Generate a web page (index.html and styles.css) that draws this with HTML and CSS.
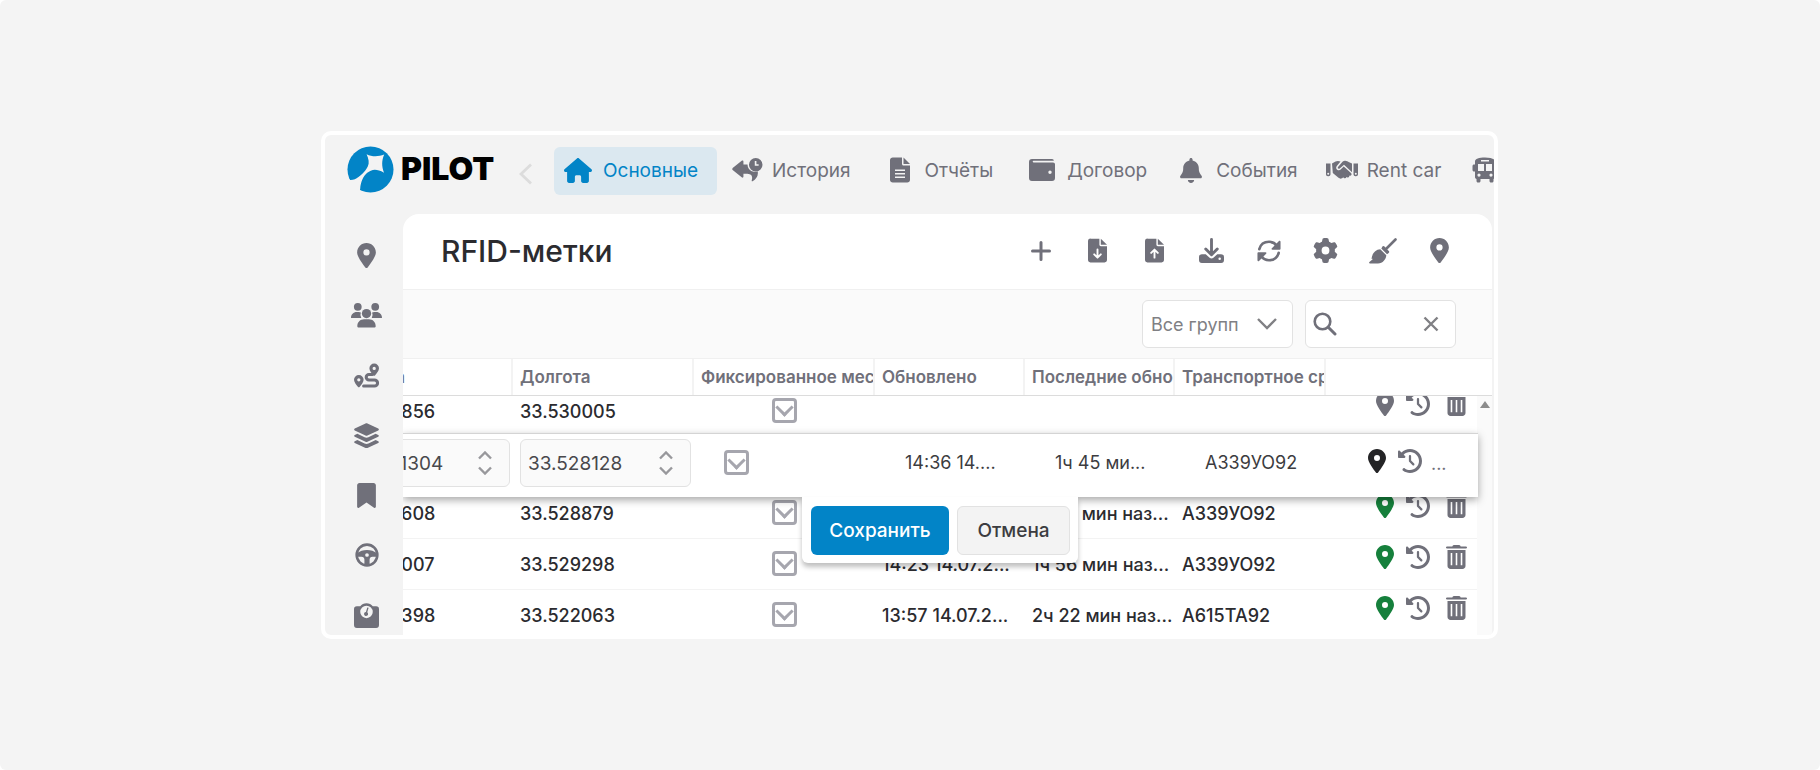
FILE: index.html
```html
<!DOCTYPE html>
<html lang="ru">
<head>
<meta charset="utf-8">
<meta name="viewport" content="width=device-width, initial-scale=1">
<title>PILOT — RFID-метки</title>
<link rel="stylesheet" href="styles.css">
</head>
<body>
<svg class="sprite" aria-hidden="true">
  <symbol id="pin" viewBox="0 0 384 512"><path d="M215.7 499.2C267 435 384 279.4 384 192C384 86 298 0 192 0S0 86 0 192c0 87.4 117 243 168.3 307.2c12.3 15.3 35.1 15.3 47.4 0zM192 128a64 64 0 1 1 0 128 64 64 0 1 1 0-128z"/></symbol>
  <symbol id="history" viewBox="0 0 512 512"><path d="M75 75L41 41C25.9 25.9 0 36.6 0 57.9V168c0 13.3 10.7 24 24 24H134.1c21.4 0 32.1-25.9 17-41l-30.8-30.8C155 85.5 203 64 256 64c106 0 192 86 192 192s-86 192-192 192c-40.8 0-78.6-12.7-109.7-34.4c-14.5-10.1-34.4-6.6-44.6 7.9s-6.6 34.4 7.9 44.6C151.2 495 201.7 512 256 512c141.4 0 256-114.6 256-256S397.4 0 256 0C185.3 0 121.3 28.7 75 75zm181 53c-13.3 0-24 10.7-24 24V256c0 6.4 2.5 12.5 7 17l72 72c9.4 9.4 24.6 9.4 33.9 0s9.4-24.6 0-33.9l-65-65V152c0-13.3-10.7-24-24-24z"/></symbol>
  <symbol id="trash" viewBox="0 0 448 512"><path fill-rule="evenodd" d="M170 0h108c12 0 23 7 28 18l7 14h103c18 0 32 7 32 20s-14 20-32 20H32C14 72 0 65 0 52s14-20 32-20h103l7-14C147 7 158 0 170 0zM32 104h384v344c0 35-29 64-64 64H96c-35 0-64-29-64-64zM100 168v264h34V168zM207 168v264h34V168zM314 168v264h34V168z"/></symbol>
  <symbol id="home" viewBox="0 0 576 512"><path d="M575.8 255.5c0 18-15 32.1-32 32.1h-32l.7 160.2c0 2.7-.2 5.4-.5 8.1V472c0 22.1-17.9 40-40 40H392c-22.1 0-40-17.9-40-40V384c0-17.7-14.3-32-32-32H256c-17.7 0-32 14.3-32 32v88c0 22.1-17.9 40-40 40H104c-22.1 0-40-17.9-40-40V287.6H32c-18 0-32-14-32-32.1c0-9 3-17 10-24L266.4 8c7-7 15-8 22-8s15 2 21 7L564.8 231.5c8 7 12 15 11 24z"/></symbol>
  <symbol id="reply-clock" viewBox="0 0 32 26"><path d="M1 10.600 10 3.500c1-.8 1.800-.3 1.800.8v3h4.200a8 8 0 0 0 6.500 7.600c1.500 0 3.500-.3 4-.6 1 4.500-1.500 8-5.200 10.200-.8.4-1.200-.1-.9-.9 1-3.600.2-6.600-4.600-6.800h-4v3c0 1.100-.8 1.600-1.800.8L1 13.200a1.700 1.700 0 0 1 0-2.600z"/><path fill-rule="evenodd" d="M24.500.5a7 7 0 1 1 0 14 7 7 0 0 1 0-14zM23.500 3.800v4.800h4V7h-2.300V3.800z"/></symbol>
  <symbol id="report" viewBox="0 0 20 26"><path fill-rule="evenodd" d="M3 .5h9V7c0 .8.700 1.500 1.500 1.500H20v14a2.800 2.800 0 0 1-3 3H3a2.800 2.800 0 0 1-3-3v-19a2.800 2.800 0 0 1 3-3zM5 12.500V14h10v-1.500zM5 16v1.500h10V16zM5 19.500V21h10v-1.500z"/><path d="M13.500.5 20 7h-6.500z"/></symbol>
  <symbol id="wallet" viewBox="0 0 26 22"><path fill-rule="evenodd" d="M3 0h20c1.200 0 1.800.8 1.800 1.800H4.500a.8.800 0 0 0 0 1.600H24c1.300 0 2 .9 2 2V19a3 3 0 0 1-3 3H3a3 3 0 0 1-3-3V3a3 3 0 0 1 3-3zM21 11.500a1.700 1.700 0 1 0 0 3.400 1.700 1.700 0 0 0 0-3.400z"/></symbol>
  <symbol id="bell" viewBox="0 0 448 512"><path d="M224 0c-17.700 0-32 14.300-32 32V51.200C119 66 64 130.600 64 208v18.800c0 47-17.300 92.400-48.500 127.600l-7.400 8.300c-8.400 9.400-10.400 22.900-5.300 34.400S19.400 416 32 416H416c12.600 0 24-7.400 29.200-18.900s3.100-25-5.300-34.400l-7.400-8.300C401.300 319.200 384 273.900 384 226.800V208c0-77.400-55-142-128-156.800V32c0-17.700-14.300-32-32-32zm45.300 493.300c12-12 18.700-28.300 18.700-45.300H160c0 17 6.700 33.300 18.700 45.300s28.300 18.700 45.300 18.700s33.300-6.700 45.300-18.700z"/></symbol>
  <symbol id="handshake" viewBox="0 0 32 20"><path fill-rule="evenodd" d="M0 3.500h4.500v10.800c0 1.200-.9 2-2 2H2c-1.200 0-2-.8-2-2zM2.200 12.800a1 1 0 1 0 0 2 1 1 0 0 0 0-2zM27.500 3.500H32v10.800c0 1.200-.8 2-2 2h-.5c-1.100 0-2-.8-2-2zM29.800 12.800a1 1 0 1 0 0 2 1 1 0 0 0 0-2z"/><path d="M6 3.600 9.500 1.500C11 .8 13 .8 14.500 1.600L10.800 6c-1 1.300-.8 2.800.4 3.700 1.300.9 2.700.7 3.700-.4l2.800-2.800 7.300 6.500c.9.900.7 2-.2 2.500-.6.400-1.200.3-1.600 0 .3 1-.3 1.800-1.100 2-.7.300-1.200 0-1.600-.4-.5 1.300-1.700 1.600-2.600.8l-.8-.7c-1.200 1.800-3.200 1.800-4.600.6L6.800 13z"/><path d="m12 7 4.500-5.200C17.300 1 18.300.7 19.300.8c1.500.1 2.300.5 3.300 1.200L26 3.600v8.600l-8-7.400-4.300 3.600c-1.200.9-2.500-.1-1.700-1.400z"/></symbol>
  <symbol id="bus" viewBox="0 0 26 26"><path fill-rule="evenodd" d="M13 .5c6 0 10 1.400 10 4v3h1c.8 0 1.500.7 1.500 1.500v4c0 .8-.7 1.500-1.500 1.500h-1V20c0 1-.6 1.700-1.500 2v2c0 .9-.6 1.500-1.500 1.500h-1c-.9 0-1.500-.6-1.500-1.500v-2h-9v2c0 .9-.6 1.500-1.500 1.500H6c-.9 0-1.500-.6-1.500-1.500v-2C3.600 21.700 3 21 3 20v-5.500H2c-.8 0-1.500-.7-1.500-1.500V9c0-.8.700-1.500 1.500-1.500h1v-3c0-2.600 4-4 10-4zM9 3v1.500h8V3zM6 7v7h6V7zM14 7v7h6V7zM7 16.500a1.600 1.600 0 1 0 0 3.200 1.600 1.600 0 0 0 0-3.200zM19 16.500a1.600 1.600 0 1 0 0 3.200 1.600 1.600 0 0 0 0-3.200z"/></symbol>
  <symbol id="users" viewBox="0 0 32 26"><circle cx="7" cy="4.500" r="4"/><circle cx="25" cy="4.500" r="4"/><circle cx="16" cy="11.500" r="4.800"/><path d="M0 16c0-3.500 2.500-6 6-6h2c.8 0 1.600.2 2.200.5a6 6 0 0 0 .4 5.500zM32 16c0-3.500-2.500-6-6-6h-2c-.8 0-1.600.2-2.200.5a6 6 0 0 1-.4 5.500zM6.500 24.500c0-4 3-7 7-7h5c4 0 7 3 7 7 0 .8-.7 1.500-1.500 1.500H8c-.8 0-1.500-.7-1.500-1.500z"/></symbol>
  <symbol id="route" viewBox="0 0 26 26"><path fill-rule="evenodd" d="M21 .5a5 5 0 0 1 5 5c0 2.700-2.500 5.500-4 7.200a1.300 1.300 0 0 1-2 0c-1.500-1.700-4-4.500-4-7.200a5 5 0 0 1 5-5zM21 4a1.700 1.700 0 1 0 0 3.400A1.700 1.700 0 0 0 21 4zM5 12.500a5 5 0 0 1 5 5c0 2.500-2.500 5.500-4 7.200a1.300 1.300 0 0 1-2 0c-1.500-1.700-4-4.700-4-7.200a5 5 0 0 1 5-5zM5 15.800a1.700 1.700 0 1 0 0 3.400 1.700 1.700 0 0 0 0-3.400z"/><path d="M19 12h-3.500a2.800 2.800 0 0 0 0 5.600h5.800a3.200 3.200 0 0 1 0 6.400H10" fill="none" stroke="currentColor" stroke-width="3.200" stroke-linecap="round"/></symbol>
  <symbol id="layers" viewBox="0 0 26 26"><path d="M12 .4c.6-.3 1.400-.3 2 0l11.200 5.300c.9.400.9 1.600 0 2L14 13c-.6.300-1.400.3-2 0L.8 7.700c-.9-.4-.9-1.600 0-2z"/><path d="m3.500 11.200 7.500 3.600c1.300.6 2.700.6 4 0l7.500-3.600 2.700 1.200c.9.400.9 1.500 0 1.900L14 19.500c-.6.300-1.400.3-2 0L.8 14.300c-.9-.4-.9-1.500 0-1.900z"/><path d="m3.500 17.700 7.500 3.600c1.300.6 2.700.6 4 0l7.500-3.600 2.700 1.200c.9.400.9 1.500 0 1.900L14 26c-.6.300-1.400.3-2 0L.8 20.800c-.9-.4-.9-1.500 0-1.900z"/></symbol>
  <symbol id="bookmark" viewBox="0 0 384 512"><path d="M0 48V487.700C0 501.100 10.900 512 24.300 512c5 0 9.900-1.500 14-4.400L192 400 345.700 507.600c4.100 2.900 9 4.400 14 4.400c13.400 0 24.300-10.900 24.300-24.300V48c0-26.500-21.500-48-48-48H48C21.500 0 0 21.500 0 48z"/></symbol>
  <symbol id="wheel" viewBox="0 0 26 26"><circle cx="13" cy="13" r="11.200" fill="none" stroke="currentColor" stroke-width="2.800"/><path fill-rule="evenodd" d="M2 11.500C5 8.600 9 7.600 13 7.600s8 1 11 3.900V15h-5c-2 0-3.200 1.300-3.200 3.200V24h-5.600v-5.800c0-1.900-1.200-3.200-3.200-3.200H2zM13 11a2 2 0 1 0 0 4 2 2 0 0 0 0-4z"/></symbol>
  <symbol id="scale" viewBox="0 0 26 26"><path fill-rule="evenodd" d="M6.500 3.500C8 1.500 10.300.2 13 .2s5 1.300 6.500 3.300H23a3 3 0 0 1 3 3V23a3 3 0 0 1-3 3H3a3 3 0 0 1-3-3V6.500a3 3 0 0 1 3-3zM13 2.800a6.500 6.500 0 1 0 0 13 6.500 6.500 0 0 0 0-13z"/><path d="m15.200 5-1.400 4.700a2.100 2.100 0 1 1-1.400-.4l1.400-4.700z"/></symbol>
  <symbol id="plus" viewBox="0 0 20 20"><path d="M10 1.500v17M1.500 10h17" stroke="currentColor" stroke-width="3" stroke-linecap="round"/></symbol>
  <symbol id="file-down" viewBox="0 0 20 26"><path d="M3 .5h9V7c0 .8.700 1.500 1.500 1.500H20v14a2.800 2.800 0 0 1-3 3H3a2.800 2.800 0 0 1-3-3v-19a2.800 2.800 0 0 1 3-3z"/><path d="M13.500.5 20 7h-6.500z"/><path class="cut" d="M10 12v8M6.500 17l3.500 3.500 3.500-3.500"/></symbol>
  <symbol id="file-up" viewBox="0 0 20 26"><path d="M3 .5h9V7c0 .8.700 1.500 1.500 1.500H20v14a2.800 2.800 0 0 1-3 3H3a2.800 2.800 0 0 1-3-3v-19a2.800 2.800 0 0 1 3-3z"/><path d="M13.500.5 20 7h-6.500z"/><path class="cut" d="M10 20.500v-8M6.500 15.500 10 12l3.500 3.500"/></symbol>
  <symbol id="download" viewBox="0 0 26 26"><path d="M13 1.500V16M7 11.500l6 6 6-6" fill="none" stroke="currentColor" stroke-width="3" stroke-linecap="round" stroke-linejoin="round"/><path fill-rule="evenodd" d="M3 17h4l4 3.500c1.300 1 2.700 1 4 0L19 17h4a3 3 0 0 1 3 3v3a3 3 0 0 1-3 3H3a3 3 0 0 1-3-3v-3a3 3 0 0 1 3-3zM21.500 20.300a1.300 1.300 0 1 0 0 2.600 1.300 1.300 0 0 0 0-2.600z"/></symbol>
  <symbol id="refresh" viewBox="0 0 26 26"><path d="M2.500 11C4 5.500 8.500 3 13 3c3.500 0 6.500 1.500 8.500 4.500M23.500 15C22 20.500 17.500 23 13 23c-3.500 0-6.500-1.500-8.500-4.500" fill="none" stroke="currentColor" stroke-width="2.900" stroke-linecap="round"/><path d="M25.500 3v7.500c0 .8-.5 1.200-1.200 1.200h-7.500c-1 0-1.400-1-.7-1.700l7.700-7.700c.7-.7 1.700-.3 1.700.7zM.5 23v-7.500c0-.8.500-1.200 1.200-1.200h7.500c1 0 1.400 1 .7 1.700l-7.700 7.700c-.7.700-1.700.3-1.700-.7z"/></symbol>
  <symbol id="gear" viewBox="0 0 512 512"><path d="M495.9 166.600c3.200 8.700 .5 18.400-6.400 24.600l-43.300 39.400c1.100 8.300 1.700 16.800 1.700 25.400s-.6 17.100-1.700 25.400l43.300 39.400c6.900 6.200 9.600 15.900 6.400 24.600c-4.400 11.900-9.700 23.300-15.800 34.300l-4.700 8.100c-6.600 11-14 21.400-22.100 31.200c-5.900 7.200-15.700 9.600-24.500 6.800l-55.700-17.700c-13.400 10.300-28.200 18.900-44 25.400l-12.500 57.100c-2 9.100-9 16.300-18.200 17.800c-13.800 2.300-28 3.500-42.500 3.500s-28.700-1.200-42.500-3.500c-9.200-1.500-16.200-8.700-18.200-17.800l-12.500-57.100c-15.800-6.500-30.600-15.100-44-25.400L83.100 425.900c-8.800 2.800-18.600 .3-24.500-6.800c-8.100-9.800-15.500-20.200-22.100-31.200l-4.700-8.100c-6.100-11-11.400-22.400-15.800-34.300c-3.200-8.700-.5-18.400 6.400-24.600l43.300-39.400C64.600 273.100 64 264.600 64 256s.6-17.100 1.700-25.400L22.400 191.200c-6.900-6.200-9.600-15.900-6.400-24.600c4.400-11.900 9.700-23.300 15.800-34.300l4.700-8.100c6.600-11 14-21.400 22.100-31.200c5.900-7.200 15.700-9.600 24.500-6.800l55.700 17.700c13.400-10.300 28.200-18.900 44-25.400l12.500-57.100c2-9.100 9-16.300 18.200-17.800C227.300 1.200 241.500 0 256 0s28.700 1.200 42.500 3.500c9.200 1.500 16.200 8.700 18.200 17.800l12.500 57.100c15.800 6.500 30.600 15.100 44 25.400l55.700-17.700c8.800-2.800 18.600-.3 24.500 6.800c8.100 9.800 15.500 20.200 22.100 31.200l4.700 8.100c6.100 11 11.400 22.400 15.800 34.300zM256 336a80 80 0 1 0 0-160 80 80 0 1 0 0 160z"/></symbol>
  <symbol id="broom" viewBox="0 0 28 26"><path d="m26.500 1.500-9 9" fill="none" stroke="currentColor" stroke-width="2.600" stroke-linecap="round"/><path d="M13.500 8.500c.6-.6 1.400-.5 2 .1l4.300 4.300c.6.600.6 1.500-.1 2l-1.700 1.300-5.700-5.800z"/><path d="m11.300 11.300 6 6c-.2 4-3.500 8.200-8.300 8.200H1c-.8 0-1.200-.9-.6-1.400l3-2.600c.4-.4.1-.8-.4-.7l-.5.100c.6-5.500 4-9.300 8.800-9.600z"/></symbol>
  <symbol id="search" viewBox="0 0 24 24"><circle cx="9.500" cy="9.500" r="7.800" fill="none" stroke="currentColor" stroke-width="2.600"/><path d="m15.500 15.500 6.500 6.500" fill="none" stroke="currentColor" stroke-width="3" stroke-linecap="round"/></symbol>
</svg>

<div class="window">
  <header class="topbar">
    <a class="brand" href="#">
      <svg class="brand-mark" viewBox="0 0 48 48" aria-hidden="true"><circle cx="24" cy="24" r="23.500" fill="#0284c7"/><path d="M20 8.300c5.500 2.700 12 2.700 18 .3-2.700 6-2.700 12-.2 18.600-3.800-2-6.600-2.900-9.300-2.900-6 .5-10.500 4.700-12.700 9.700-1.400 3.200-2.200 6.500-2.300 9.500C13 46 13 48 12 48H0V34c2 1.200 5.500 1 8 0 5-2.600 10.500-7.500 13.200-13 1.900-4 .9-8.200-1.200-12.700z" fill="#f3f3f3"/></svg>
      <span class="brand-name">PILOT</span>
    </a>
    <button class="nav-back" aria-label="Назад"><svg width="14" height="22" viewBox="0 0 14 22"><path d="M12 1.500 2 11l10 9.500" fill="none" stroke="currentColor" stroke-width="2.800"/></svg></button>
    <nav class="tabs">
      <a class="tab roomy active" href="#"><span class="tab-icon"><svg width="28" height="25"><use href="#home"/></svg></span>Основные</a>
      <a class="tab roomy" href="#"><span class="tab-icon"><svg width="31" height="26"><use href="#reply-clock"/></svg></span>История</a>
      <a class="tab roomy" href="#"><span class="tab-icon"><svg width="20" height="26"><use href="#report"/></svg></span>Отчёты</a>
      <a class="tab" href="#"><span class="tab-icon"><svg width="26" height="22"><use href="#wallet"/></svg></span>Договор</a>
      <a class="tab" href="#"><span class="tab-icon"><svg width="22" height="25"><use href="#bell"/></svg></span>События</a>
      <a class="tab" href="#"><span class="tab-icon"><svg width="32" height="20"><use href="#handshake"/></svg></span>Rent car</a>
      <a class="tab" href="#" aria-label="Транспорт"><span class="tab-icon"><svg width="26" height="26"><use href="#bus"/></svg></span></a>
    </nav>
  </header>

  <div class="workspace">
    <aside class="sidebar">
      <a href="#" aria-label="Карта"><svg width="19" height="25"><use href="#pin"/></svg></a>
      <a href="#" aria-label="Пользователи"><svg width="31" height="26"><use href="#users"/></svg></a>
      <a href="#" aria-label="Маршруты"><svg width="25" height="25"><use href="#route"/></svg></a>
      <a href="#" aria-label="Слои"><svg width="25" height="25"><use href="#layers"/></svg></a>
      <a href="#" aria-label="Закладки"><svg width="19" height="25"><use href="#bookmark"/></svg></a>
      <a href="#" aria-label="Водители"><svg width="24" height="24"><use href="#wheel"/></svg></a>
      <a href="#" aria-label="Весы"><svg width="25" height="25"><use href="#scale"/></svg></a>
    </aside>

    <main class="panel">
      <div class="panel-head">
        <h1>RFID-метки</h1>
        <div class="actions">
          <button aria-label="Добавить"><svg width="20" height="20"><use href="#plus"/></svg></button>
          <button aria-label="Импорт"><svg width="19" height="25"><use href="#file-down"/></svg></button>
          <button aria-label="Экспорт"><svg width="19" height="25"><use href="#file-up"/></svg></button>
          <button aria-label="Скачать"><svg width="25" height="25"><use href="#download"/></svg></button>
          <button aria-label="Обновить"><svg width="24" height="24"><use href="#refresh"/></svg></button>
          <button aria-label="Настройки"><svg width="25" height="25"><use href="#gear"/></svg></button>
          <button aria-label="Очистить"><svg width="28" height="26"><use href="#broom"/></svg></button>
          <button aria-label="На карте"><svg width="19" height="25"><use href="#pin"/></svg></button>
        </div>
      </div>

      <div class="filters">
        <div class="group-box">
          <select aria-label="Группа"><option>Все групп</option></select>
          <svg width="20" height="12" viewBox="0 0 20 12" aria-hidden="true"><path d="m1 1 9 9 9-9" fill="none" stroke="currentColor" stroke-width="2.400"/></svg>
        </div>
        <div class="search-box">
          <svg width="24" height="24" aria-hidden="true"><use href="#search"/></svg>
          <input type="text" aria-label="Поиск">
          <button aria-label="Сбросить"><svg width="16" height="16" viewBox="0 0 16 16"><path d="m1.500 1.500 13 13m0-13-13 13" stroke="currentColor" stroke-width="2.400"/></svg></button>
        </div>
      </div>

      <div class="grid-area">
        <div class="grid-head">
          <div class="shifted columns" role="row">
            <span>Широта</span><span>Долгота</span><span>Фиксированное место</span><span>Обновлено</span><span>Последние обновления</span><span>Транспортное средство</span><span></span>
          </div>
        </div>
        <div class="grid-body">
          <div class="rows">
            <table class="shifted" aria-label="RFID-метки">
              <colgroup><col class="wide"><col class="wide"><col class="wide"><col class="mid"><col class="mid"><col class="mid"><col></colgroup>
              <tbody>
                <tr><td>44.590856</td><td>33.530005</td><td class="tick"><input type="checkbox" aria-label="Фиксированное место"></td><td></td><td></td><td></td>
                  <td class="tools"><div><button aria-label="На карте"><svg width="18" height="24"><use href="#pin"/></svg></button><button aria-label="История"><svg width="24" height="24"><use href="#history"/></svg></button><button aria-label="Удалить"><svg width="21" height="24"><use href="#trash"/></svg></button></div></td></tr>
                <tr aria-hidden="true"><td colspan="7"></td></tr>
                <tr><td>44.589608</td><td>33.528879</td><td class="tick"><input type="checkbox" aria-label="Фиксированное место"></td><td>14:32 14.07.2...</td><td>1ч 47 мин наз...</td><td>А339УО92</td>
                  <td class="tools"><div><button class="live" aria-label="На карте"><svg width="18" height="24"><use href="#pin"/></svg></button><button aria-label="История"><svg width="24" height="24"><use href="#history"/></svg></button><button aria-label="Удалить"><svg width="21" height="24"><use href="#trash"/></svg></button></div></td></tr>
                <tr><td>44.590007</td><td>33.529298</td><td class="tick"><input type="checkbox" aria-label="Фиксированное место"></td><td>14:23 14.07.2...</td><td>1ч 56 мин наз...</td><td>А339УО92</td>
                  <td class="tools"><div><button class="live" aria-label="На карте"><svg width="18" height="24"><use href="#pin"/></svg></button><button aria-label="История"><svg width="24" height="24"><use href="#history"/></svg></button><button aria-label="Удалить"><svg width="21" height="24"><use href="#trash"/></svg></button></div></td></tr>
                <tr><td>44.590398</td><td>33.522063</td><td class="tick"><input type="checkbox" aria-label="Фиксированное место"></td><td>13:57 14.07.2...</td><td>2ч 22 мин наз...</td><td>А615ТА92</td>
                  <td class="tools"><div><button class="live" aria-label="На карте"><svg width="18" height="24"><use href="#pin"/></svg></button><button aria-label="История"><svg width="24" height="24"><use href="#history"/></svg></button><button aria-label="Удалить"><svg width="21" height="24"><use href="#trash"/></svg></button></div></td></tr>
              </tbody>
            </table>
          </div>
          <div class="scrollbar" aria-hidden="true"><span></span></div>

          <form class="editor">
            <div class="editor-clip">
              <div class="shifted columns fields">
                <label class="number"><input type="text" value="44.591304" aria-label="Широта"><svg width="14" height="24" viewBox="0 0 14 24"><path d="m1 7.500 6-6 6 6M1 16.500l6 6 6-6" fill="none" stroke="currentColor" stroke-width="2.400"/></svg></label>
                <label class="number"><input type="text" value="33.528128" aria-label="Долгота"><svg width="14" height="24" viewBox="0 0 14 24"><path d="m1 7.500 6-6 6 6M1 16.500l6 6 6-6" fill="none" stroke="currentColor" stroke-width="2.400"/></svg></label>
                <span class="edit-tick"><input type="checkbox" aria-label="Фиксированное место"></span>
                <span class="static">14:36 14....</span>
                <span class="static">1ч 45 ми...</span>
                <span class="static">А339УО92</span>
                <span class="edit-tools"><svg class="dark" width="18" height="24"><use href="#pin"/></svg><svg width="24" height="24"><use href="#history"/></svg><span>...</span></span>
              </div>
            </div>
            <div class="confirm">
              <button type="button" class="save">Сохранить</button>
              <button type="button" class="cancel">Отмена</button>
            </div>
          </form>
        </div>
      </div>
    </main>
  </div>
</div>
</body>
</html>
```

FILE: styles.css
```css
* { box-sizing: border-box; }

html { background: #fff; }

body {
  margin: 0;
  height: 100vh;
  padding: 131px 322px 131px 321px;
  font-family: Inter, "Liberation Sans", sans-serif;
  font-size: 18px;
  color: #2b2b2f;
  background: #f4f4f4;
  border-radius: 6px;
  overflow: hidden;
}

button, input, select { font: inherit; color: inherit; }
button { border: 0; background: none; padding: 0; cursor: pointer; }
a { color: inherit; text-decoration: none; }
svg { display: block; fill: currentColor; flex: none; }
.sprite { position: absolute; width: 0; height: 0; }
.cut { fill: none; stroke: #fff; stroke-width: 2; stroke-linecap: round; stroke-linejoin: round; }

.window {
  height: 100%;
  display: flex;
  flex-direction: column;
  border: 4px solid #fff;
  border-radius: 10px;
  background: #f3f3f3;
  overflow: hidden;
}

/* top bar */
.topbar {
  flex: none;
  display: flex;
  align-items: flex-start;
  height: 79px;
  padding-top: 10px;
  padding-left: 22px;
  overflow: hidden;
}
.brand { display: flex; align-items: center; gap: 7px; flex: none; width: 172px; height: 48px; }
.brand-mark { width: 47px; height: 47px; }
.brand-name { color: #000; font-size: 32px; line-height: 32px; font-weight: 900; }
.nav-back { width: 14px; height: 58px; color: #dcdcdc; display: flex; align-items: center; flex: none; margin-right: 21px; }
.tabs { display: flex; gap: 6px; margin-top: 2px; }
.tab {
  flex: none;
  display: flex;
  align-items: center;
  gap: 9px;
  height: 48px;
  padding: 0 14px 0 8px;
  border-radius: 6px;
  color: #70707a;
  font-size: 19px;
  line-height: 24px;
}
.tab.roomy { padding-right: 19px; }
.tab-icon { display: flex; justify-content: center; width: 32px; padding-bottom: 2px; }
.tab.active { background: #dbe8f0; color: #0284c7; }

/* side bar */
.workspace { flex: 1; min-height: 0; display: flex; }
.sidebar { flex: none; width: 78px; padding: 11px 0 0 5px; color: #70707a; }
.sidebar a { display: flex; align-items: center; justify-content: center; height: 60px; }

/* panel */
.panel {
  flex: 1;
  min-width: 0;
  display: flex;
  flex-direction: column;
  margin-right: 2px;
  background: #fff;
  border-radius: 16px 16px 0 0;
  overflow: hidden;
}
.panel-head {
  flex: none;
  display: flex;
  align-items: center;
  justify-content: space-between;
  height: 75px;
  padding: 0 24px 2px 38px;
}
h1 { margin: 0; font-size: 30px; line-height: 36px; font-weight: 500; }
.actions { display: flex; color: #70707a; }
.actions button { display: flex; align-items: center; justify-content: center; width: 57px; height: 48px; }

.filters {
  flex: none;
  display: flex;
  justify-content: flex-end;
  gap: 12px;
  padding: 10px 36px;
  border-top: 1px solid #f0f0f0;
  background: #fafafa;
}
.group-box, .search-box {
  display: flex;
  align-items: center;
  width: 151px;
  height: 48px;
  border: 1px solid #e2e2e2;
  border-radius: 6px;
  background: #fff;
  color: #808084;
}
.group-box { position: relative; }
.group-box select { appearance: none; width: 100%; height: 100%; padding: 0 36px 0 8px; border: 0; background: none; }
.group-box svg { position: absolute; right: 15px; pointer-events: none; }
.search-box { padding: 0 16px 0 7px; }
.search-box > svg { color: #70707a; }
.search-box input { flex: 1; min-width: 0; border: 0; background: none; outline: 0; }

/* grid */
.grid-area { flex: 1; min-height: 0; display: flex; flex-direction: column; }
.shifted { margin-left: -71px; }
.columns { display: grid; grid-template-columns: 181px 181px 181px 150px 150px 151px 1fr; }
.grid-head { flex: none; overflow: hidden; border-top: 1px solid #f0f0f0; border-bottom: 1px solid #dcdcdc; color: #70707a; font-weight: 600; font-size: 17px; }
.grid-head .columns > span {
  height: 36px;
  padding-left: 7px;
  border-right: 2px solid #f3f3f3;
  line-height: 36px;
  white-space: nowrap;
  overflow: hidden;
}
.grid-head .columns > span:last-child { border-right: 0; }

.grid-body { position: relative; flex: 1; min-height: 0; display: flex; }
.rows { flex: 1; min-width: 0; overflow: hidden; }
.rows table { table-layout: fixed; border-collapse: separate; border-spacing: 0; width: calc(100% + 71px); margin-top: -10px; }
.wide { width: 181px; }
.mid { width: 150px; }
.rows td {
  height: 51px;
  padding: 1px 0 0 7px;
  border-bottom: 1px solid #f3f3f3;
  white-space: nowrap;
  overflow: hidden;
  font-weight: 500;
}
.rows .tick { padding: 0 0 2px; text-align: center; }
.rows .tools { vertical-align: top; padding: 0 10px 0 0; overflow: visible; }
.tools div { display: flex; justify-content: flex-end; padding-top: 6px; color: #70707a; }
.tools button:nth-child(2) { margin: 0 16px 0 12px; }
.tools .live { color: #16803c; }

input[type="checkbox"] {
  appearance: none;
  display: inline-grid;
  place-items: center;
  width: 25px;
  height: 25px;
  margin: 0;
  border: 3px solid #a6a6ae;
  border-radius: 4px;
  background: #fff;
  vertical-align: middle;
}
input[type="checkbox"]::before {
  content: "";
  width: 10px;
  height: 10px;
  margin-top: -5px;
  border: solid #a6a6ae;
  border-width: 0 3px 3px 0;
  transform: rotate(45deg);
}

.scrollbar { flex: none; width: 15px; background: #fafafa; display: flex; justify-content: center; }
.scrollbar span { height: 0; margin-top: 5px; border: 5px solid transparent; border-top-width: 0; border-bottom: 7px solid #8c8c8c; }

/* inline row editor */
.editor {
  position: absolute;
  left: 0;
  right: 14px;
  top: 37px;
  height: 64px;
  background: #fff;
  border-top: 1px solid #d4d4d4;
  box-shadow: 0 3px 8px rgba(0, 0, 0, 0.35);
}
.editor-clip { height: 100%; overflow: hidden; background: #fff; }
.fields { padding-top: 5px; color: #3c3c40; }
.number {
  display: flex;
  align-items: center;
  height: 48px;
  margin: 0 3px 0 7px;
  padding: 0 17px 0 7px;
  border: 1px solid #e2e2e2;
  border-radius: 6px;
  background: #fafafa;
  font-size: 19px;
  color: #48484c;
}
.number input { flex: 1; min-width: 0; padding: 0; border: 0; background: none; outline: 0; }
.number svg { color: #98989c; }
.edit-tick { padding: 11px 0 0 30px; }
.static { padding-left: 30px; line-height: 47px; white-space: nowrap; }
.edit-tools { display: flex; padding: 10px 0 0 42px; color: #70707a; line-height: 30px; }
.edit-tools svg { margin-right: 12px; }
.edit-tools svg + svg { margin-right: 9px; }
.edit-tools .dark { color: #242426; }

.confirm {
  position: absolute;
  left: 399px;
  top: 100%;
  display: flex;
  gap: 8px;
  padding: 9px 8px 8px 9px;
  border-radius: 0 0 6px 6px;
  background: #fff;
  box-shadow: 0 4px 5px rgba(0, 0, 0, 0.25);
}
.confirm button { height: 49px; border-radius: 6px; font-size: 19px; font-weight: 500; }
.save { width: 138px; background: #0284c7; color: #fff; }
.cancel { width: 113px; background: #f3f3f3; border: 1px solid #e2e2e2; color: #3c3c40; }
```
